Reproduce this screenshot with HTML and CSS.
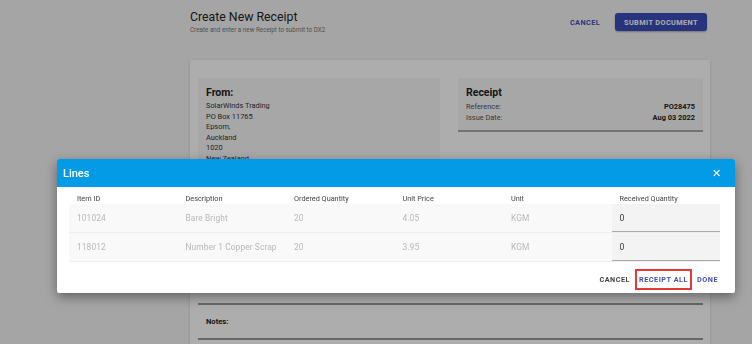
FILE: index.html
```html
<!DOCTYPE html>
<html lang="en">
<head>
    <meta charset="UTF-8">
    <meta name="viewport" content="width=device-width, initial-scale=1.0">
    <title>Create New Receipt</title>
    <link rel="stylesheet" href="styles.css">
</head>
<body>
    <div class="page">
        <div class="page-header">
            <div class="titles">
                <h1>Create New Receipt</h1>
                <p class="subtitle">Create and enter a new Receipt to submit to DX2</p>
            </div>
            <div class="header-actions">
                <button class="text-btn">CANCEL</button>
                <button class="primary-btn">SUBMIT DOCUMENT</button>
            </div>
        </div>

        <div class="doc-card">
            <div class="doc-top">
                <div class="info-card from-card">
                    <h2>From:</h2>
                    <p>SolarWinds Trading</p>
                    <p>PO Box 11765</p>
                    <p>Epsom,</p>
                    <p>Auckland</p>
                    <p>1020</p>
                    <p>New Zealand</p>
                </div>
                <div class="info-card receipt-card">
                    <h2>Receipt</h2>
                    <div class="kv"><span>Reference:</span><strong>PO28475</strong></div>
                    <div class="kv"><span>Issue Date:</span><strong>Aug 03 2022</strong></div>
                </div>
            </div>
            <div class="lines-gap"></div>
            <div class="notes">Notes:</div>
        </div>
    </div>

    <div class="overlay"></div>

    <div class="dialog">
        <div class="dialog-header">
            <span class="dialog-title">Lines</span>
            <span class="close">&#x2715;</span>
        </div>
        <div class="dialog-body">
            <div class="grid head">
                <div>Item ID</div>
                <div>Description</div>
                <div>Ordered Quantity</div>
                <div>Unit Price</div>
                <div>Unit</div>
                <div>Received Quantity</div>
            </div>
            <div class="grid row">
                <div>101024</div>
                <div>Bare Bright</div>
                <div>20</div>
                <div>4.05</div>
                <div>KGM</div>
                <div class="qty">0</div>
            </div>
            <div class="grid row">
                <div>118012</div>
                <div>Number 1 Copper Scrap</div>
                <div>20</div>
                <div>3.95</div>
                <div>KGM</div>
                <div class="qty">0</div>
            </div>
        </div>
        <div class="dialog-actions">
            <button class="text-btn grey">CANCEL</button>
            <button class="text-btn blue highlighted">RECEIPT ALL</button>
            <button class="text-btn blue">DONE</button>
        </div>
    </div>
</body>
</html>
```

FILE: styles.css
```css
body {
    margin: 0;
    font-family: Roboto, "Liberation Sans", sans-serif;
    background-color: #f4f4f4;
    color: #222;
    height: 344px;
    overflow: hidden;
}

.page {
    margin-left: 190px;
    width: 520px;
}

.page-header {
    display: flex;
    justify-content: space-between;
    align-items: flex-start;
    height: 60px;
}

h1 {
    margin: 10px 0 0;
    font-size: 12.3px;
    line-height: 15px;
    font-weight: 400;
    color: #222;
}

.subtitle {
    margin: 1px 0 0;
    font-size: 6.3px;
    color: #777;
}

.header-actions {
    display: flex;
    align-items: center;
    gap: 15px;
    margin-top: 13px;
    margin-right: 3px;
}

button {
    font-family: Roboto, "Liberation Sans", sans-serif;
    border: none;
    background: none;
    cursor: pointer;
    font-weight: 700;
    letter-spacing: 0.4px;
}

.text-btn {
    font-size: 7.3px;
    padding: 0;
    color: #3f51b5;
}

.primary-btn {
    font-size: 7.3px;
    color: #fff;
    background-color: #3a4db8;
    border-radius: 3px;
    height: 18px;
    width: 92px;
    padding: 0;
    box-shadow: 0 1px 2px rgba(0,0,0,0.3);
}

.doc-card {
    background-color: #fff;
    padding: 18px 7px 0 8px;
    height: 300px;
    box-shadow: 0 1px 3px rgba(0,0,0,0.15);
}

.doc-top {
    display: flex;
    gap: 18px;
}

.info-card {
    background-color: #f7f7f7;
    padding: 8px 8px 6px;
}

.from-card {
    width: 226px;
    height: 82px;
}

.receipt-card {
    flex: 1;
    height: 38px;
    border-bottom: 2px solid #aaa;
}

.info-card h2 {
    margin: 0 0 2px;
    font-size: 10.5px;
    line-height: 13px;
    font-weight: 700;
}

.from-card p {
    margin: 0;
    font-size: 7.4px;
    line-height: 10.6px;
    color: #333;
}

.kv {
    display: flex;
    justify-content: space-between;
    font-size: 7.4px;
    line-height: 11px;
    color: #555;
}

.kv strong {
    color: #222;
}

.lines-gap {
    height: 126px;
    border-bottom: 2px solid #999;
    margin-top: 3px;
}

.notes {
    font-size: 7.6px;
    font-weight: 700;
    padding: 12px 8px 12px;
    border-bottom: 2px solid #999;
}

.overlay {
    position: fixed;
    inset: 0;
    background-color: rgba(0,0,0,0.32);
}

.dialog {
    position: absolute;
    left: 57px;
    top: 159px;
    width: 678px;
    height: 134px;
    background-color: #fff;
    border-radius: 2px;
    box-shadow: 0 4px 12px rgba(0,0,0,0.4);
    overflow: hidden;
}

.dialog-header {
    display: flex;
    justify-content: space-between;
    align-items: center;
    height: 28px;
    padding: 0 14px 0 6px;
    background-color: #039be5;
    color: #fff;
}

.dialog-title {
    font-size: 11px;
    font-weight: 500;
}

.close {
    font-size: 11px;
}

.dialog-body {
    padding: 0 15px 0 12px;
}

.grid {
    display: grid;
    grid-template-columns: repeat(6, 1fr);
}

.grid > div {
    padding-left: 8px;
    white-space: nowrap;
}

.head {
    height: 16px;
    align-items: end;
    font-size: 7.3px;
    color: #444;
    padding-bottom: 1px;
}

.row {
    height: 28px;
    align-items: center;
    font-size: 8.4px;
    letter-spacing: 0.1px;
    color: #b8b8b8;
    background-color: #f9f9f9;
    border-bottom: 1px solid #eee;
}

.row > .qty {
    height: 27px;
    display: flex;
    align-items: center;
    font-size: 8.5px;
    letter-spacing: 0;
    background-color: #f3f3f3;
    border-bottom: 1px solid #aaa;
    color: #333;
    align-self: start;
}

.dialog-actions {
    display: flex;
    justify-content: flex-end;
    align-items: center;
    gap: 9px;
    padding: 13px 17px 0 0;
}

.dialog-actions .text-btn {
    letter-spacing: 0.5px;
}

.text-btn.grey {
    color: #444;
}

.text-btn.blue {
    color: #3f51b5;
}

.highlighted {
    outline: 2px solid #e53935;
    outline-offset: 0;
    padding: 4px 2px;
    margin: -4px -2px;
}
```
